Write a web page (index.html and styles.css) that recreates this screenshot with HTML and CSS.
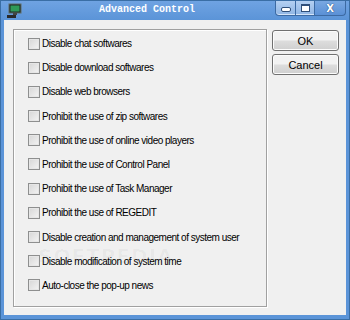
FILE: index.html
```html
<!DOCTYPE html>
<html>
<head>
  <meta charset="UTF-8">
  <title>Advanced Control</title>
  <link rel="stylesheet" href="styles.css">
</head>
<body>
  <div class="window">
    <div class="titlebar">
      <span class="app-icon">
        <svg width="16" height="16" viewBox="0 0 16 16">
          <rect x="3" y="1" width="12" height="9" fill="#1d2a24" stroke="#5f6c66"/>
          <rect x="4.5" y="2.5" width="9" height="6" fill="#2f9a58"/>
          <rect x="7" y="10" width="4" height="2" fill="#444"/>
          <rect x="1" y="12" width="9" height="3" fill="#2a2a2a"/>
        </svg>
      </span>
      <span class="title">Advanced Control</span>
      <div class="caption-btns">
        <span class="cap min"><i></i></span>
        <span class="cap max"><i></i></span>
        <span class="cap close">X</span>
      </div>
    </div>
    <div class="client">
      <fieldset class="group">
        <label class="opt"><span class="box"></span>Disable chat softwares</label>
        <label class="opt"><span class="box"></span>Disable download softwares</label>
        <label class="opt"><span class="box"></span>Disable web browsers</label>
        <label class="opt"><span class="box"></span>Prohibit the use of zip softwares</label>
        <label class="opt"><span class="box"></span>Prohibit the use of online video players</label>
        <label class="opt"><span class="box"></span>Prohibit the use of Control Panel</label>
        <label class="opt"><span class="box"></span>Prohibit the use of Task Manager</label>
        <label class="opt"><span class="box"></span>Prohibit the use of REGEDIT</label>
        <label class="opt"><span class="box"></span>Disable creation and management of system user</label>
        <label class="opt"><span class="box"></span>Disable modification of system time</label>
        <label class="opt"><span class="box"></span>Auto-close the pop-up news</label>
        <span class="watermark">SOFTPEDIA</span>
      </fieldset>
      <div class="buttons">
        <button class="btn">OK</button>
        <button class="btn">Cancel</button>
      </div>
    </div>
  </div>
</body>
</html>
```

FILE: styles.css
```css
html, body {
  margin: 0;
  padding: 0;
}

body {
  width: 350px;
  height: 320px;
  overflow: hidden;
  font-family: "Liberation Sans", sans-serif;
  font-size: 10px;
  color: #000;
}

.window {
  width: 350px;
  height: 320px;
  box-sizing: border-box;
  background: #5b94d8;
  border: 1px solid #3a6ea5;
  padding: 0 3px 4px 3px;
  display: flex;
  flex-direction: column;
}

.titlebar {
  height: 19px;
  display: flex;
  align-items: center;
  position: relative;
  background: linear-gradient(#6fa3e2, #5b94d8);
  margin: 0 -3px;
  padding: 0 3px;
}

.app-icon {
  width: 16px;
  height: 16px;
  margin-left: 2px;
}

.title {
  position: absolute;
  left: 98px;
  top: 3px;
  font-family: "Liberation Mono", monospace;
  font-size: 10px;
  font-weight: bold;
  color: #fff;
}

.caption-btns {
  margin-left: auto;
  margin-right: 0;
  display: flex;
  align-self: flex-start;
}

.cap {
  height: 15px;
  box-sizing: border-box;
  border: 1px solid #3c6aa3;
  border-top: none;
  background: linear-gradient(#b4d0f2, #8fb5e4);
  box-shadow: inset 0 -1px 0 #d4e4f8;
  display: flex;
  align-items: center;
  justify-content: center;
}

.cap.min {
  width: 21px;
  border-radius: 0 0 0 4px;
}

.cap.max {
  width: 19px;
  border-left: none;
}

.cap.close {
  width: 31px;
  border-left: none;
  border-radius: 0 0 4px 0;
  color: #fff;
  font-family: "DejaVu Sans", sans-serif;
  font-size: 10px;
  font-weight: bold;
  text-shadow: 0 0 1px #2a4a78, 0 0 1px #2a4a78;
  background: linear-gradient(#79a8e2, #5a90d6);
  box-shadow: none;
}

.cap.min i {
  width: 8px;
  height: 3px;
  border: 1px solid #2f4f7a;
  background: #fff;
  border-radius: 2px;
  margin-top: 3px;
}

.cap.max i {
  width: 7px;
  height: 5px;
  border: 1px solid #2f4f7a;
  border-top-width: 2px;
  background: #fff;
}

.client {
  flex: 1;
  background: #f0f0f0;
  display: flex;
  padding: 9px 9px 8px 9px;
  gap: 5px;
}

.group {
  position: relative;
  width: 254px;
  min-width: 0;
  flex-shrink: 0;
  margin: 0;
  padding: 7px 0 0 14px;
  box-sizing: border-box;
  border: 1px solid #a0a0a0;
  box-shadow: 1px 1px 0 #fff, inset 1px 1px 0 #fff;
  display: flex;
  flex-direction: column;
  gap: 11.2px;
}

.opt {
  display: flex;
  align-items: center;
  height: 13px;
  white-space: nowrap;
  letter-spacing: -0.5px;
}

.box {
  width: 10px;
  height: 10px;
  border: 1px solid #8e8f8f;
  background: linear-gradient(135deg, #d6d6d6, #f4f4f4);
  box-shadow: inset 0 0 0 1px #e6e6e6;
  margin-right: 2px;
}

.watermark {
  position: absolute;
  left: 24px;
  top: 214px;
  font-family: "DejaVu Sans", sans-serif;
  font-weight: bold;
  font-size: 20px;
  color: rgba(0, 0, 0, 0.03);
  letter-spacing: 1px;
}

.buttons {
  display: flex;
  flex-direction: column;
  gap: 3px;
  padding-top: 1px;
}

.btn {
  width: 67px;
  height: 21px;
  font-family: "Liberation Sans", sans-serif;
  font-size: 11px;
  color: #000;
  border: 1px solid #707070;
  border-radius: 3px;
  background: linear-gradient(#f2f2f2 45%, #dcdcdc 55%, #cfcfcf);
  box-shadow: inset 0 0 0 1px #fcfcfc;
  padding: 0;
}
```
